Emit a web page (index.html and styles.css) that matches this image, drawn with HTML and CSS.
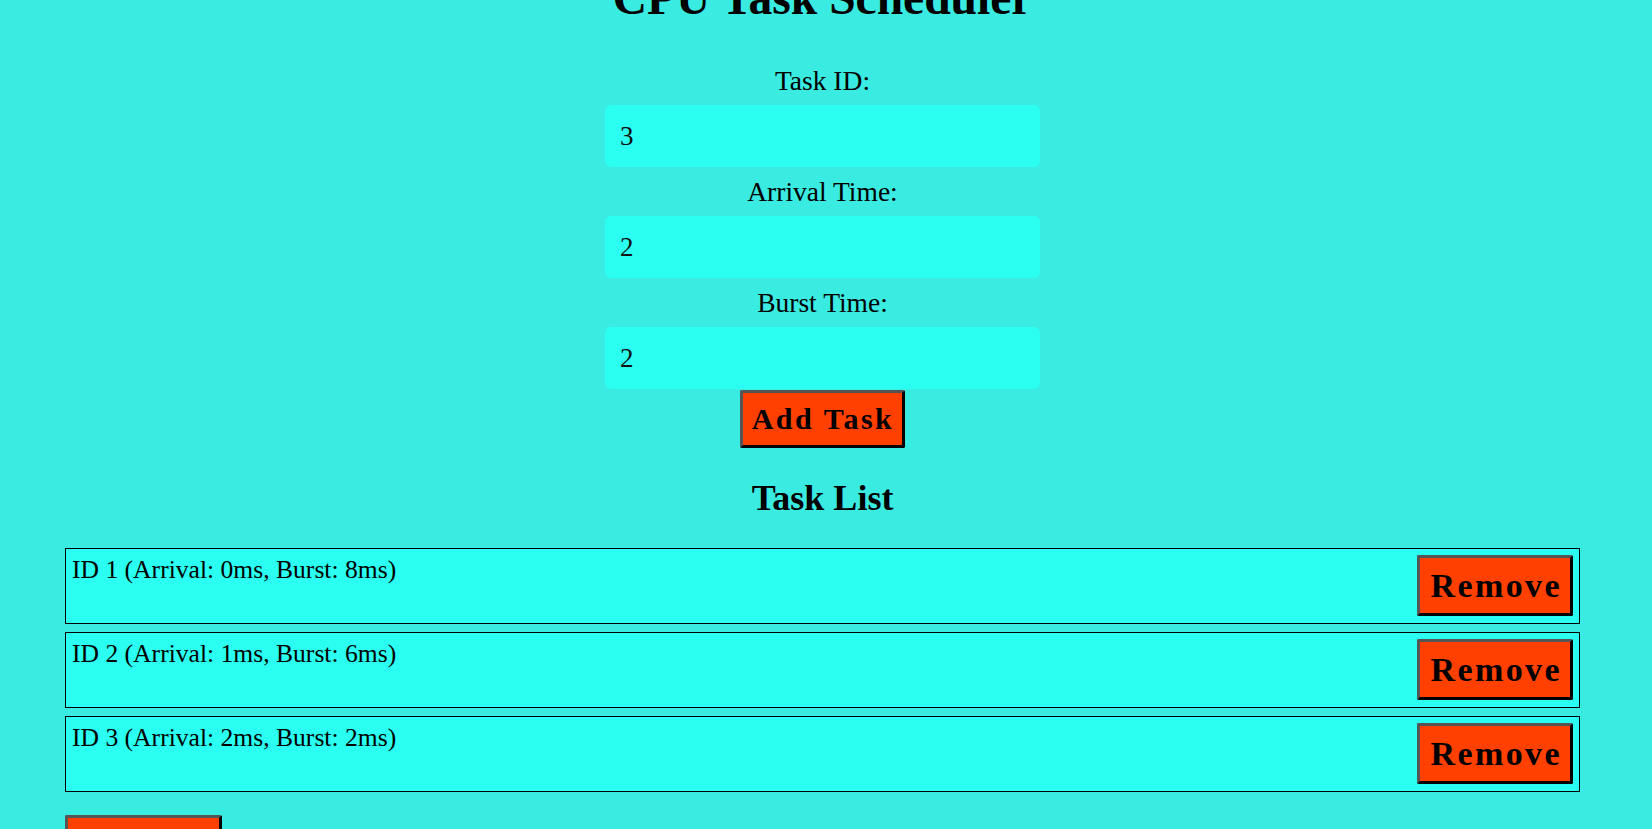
FILE: index.html
```html
<!DOCTYPE html>
<html lang="en">
<head>
<meta charset="utf-8">
<title>CPU Task Scheduler</title>
<link rel="stylesheet" href="styles.css">
</head>
<body>
<div class="page">
  <h1 class="title">CPU Task Scheduler</h1>
  <form class="task-form">
    <label class="field-label" for="tid">Task ID:</label>
    <input class="field-input" id="tid" type="text" value="3">
    <label class="field-label" for="arr">Arrival Time:</label>
    <input class="field-input" id="arr" type="text" value="2">
    <label class="field-label" for="bst">Burst Time:</label>
    <input class="field-input" id="bst" type="text" value="2">
    <button class="btn btn-add" type="button">Add Task</button>
  </form>
  <h2 class="list-title">Task List</h2>
  <ul class="task-list">
    <li class="task-item">
      <span class="task-text">ID 1 (Arrival: 0ms, Burst: 8ms)</span>
      <button class="btn btn-remove" type="button">Remove</button>
    </li>
    <li class="task-item">
      <span class="task-text">ID 2 (Arrival: 1ms, Burst: 6ms)</span>
      <button class="btn btn-remove" type="button">Remove</button>
    </li>
    <li class="task-item">
      <span class="task-text">ID 3 (Arrival: 2ms, Burst: 2ms)</span>
      <button class="btn btn-remove" type="button">Remove</button>
    </li>
  </ul>
  <div class="actions">
    <button class="btn btn-run" type="button">Schedule</button>
  </div>
</div>
</body>
</html>
```

FILE: styles.css
```css
html {
  overflow: hidden;
  background: #3aebe2;
}
body {
  margin: 0;
  background: #3aebe2;
  font-family: "Liberation Serif", "Times New Roman", serif;
  color: #000;
}
.page {
  padding: 0 72px 0 65px;
}
.title {
  margin: -29px 0 30px;
  font-size: 47.5px;
  line-height: 55px;
  font-weight: bold;
  text-align: center;
}
.task-form {
  display: flex;
  flex-direction: column;
  align-items: center;
}
.field-label {
  display: block;
  margin: 9px 0 8px;
  font-size: 27.5px;
  line-height: 32px;
}
.field-input {
  display: block;
  box-sizing: border-box;
  width: 435px;
  height: 62px;
  padding: 0 15px;
  border: none;
  border-radius: 6px;
  background: #2afff2;
  font-family: "Liberation Serif", "Times New Roman", serif;
  font-size: 27px;
  color: #111;
  outline: none;
}
.btn {
  font-family: "Liberation Serif", "Times New Roman", serif;
  font-weight: bold;
  color: #000;
  background: #ff4000;
  border-style: solid;
  border-width: 3px;
  border-color: #555 #000 #000 #555;
  border-radius: 2px;
  cursor: pointer;
}
.btn-add {
  margin-top: 1px;
  padding: 8px 8px 8px 9px;
  font-size: 30px;
  line-height: 36px;
  letter-spacing: 2.5px;
}
.list-title {
  margin: 30px 0 30px;
  font-size: 36px;
  line-height: 40px;
  font-weight: bold;
  text-align: center;
}
.task-list {
  list-style: none;
  margin: 0;
  padding: 0;
  display: flex;
  flex-direction: column;
  gap: 8px;
}
.task-item {
  display: flex;
  justify-content: space-between;
  align-items: flex-start;
  padding: 6px 6px 7px;
  border: 1px solid #000;
  background: #2afff2;
}
.task-text {
  font-size: 25.6px;
}
.btn-remove {
  padding: 8px 8px 8px 11px;
  font-size: 34px;
  line-height: 39px;
  letter-spacing: 2.4px;
}
.actions {
  margin-top: 23px;
  display: flex;
}
.btn-run {
  padding: 8px 10px;
  font-size: 30px;
  line-height: 35px;
  letter-spacing: 2px;
}
```
